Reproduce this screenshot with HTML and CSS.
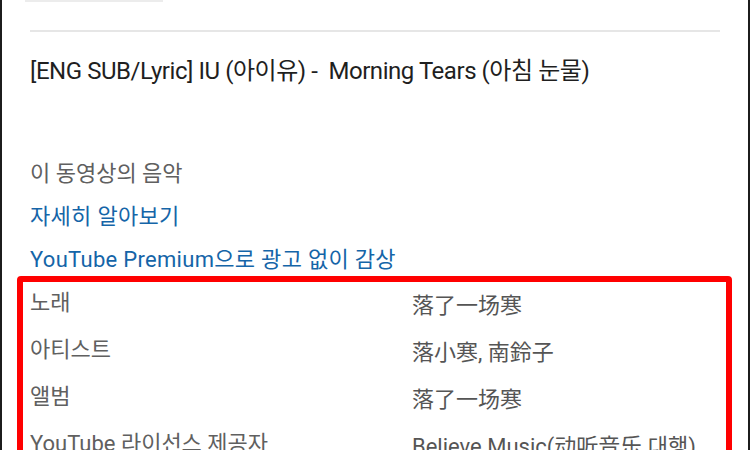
FILE: index.html
```html
<!doctype html>
<html>
<head>
<meta charset="utf-8">
<title>이 동영상의 음악</title>
<link rel="stylesheet" href="styles.css">
</head>
<body>
<div class="page">
	<div class="top-strip"><span class="chip"></span></div>
	<div class="divider"></div>
	<h1 class="title">[ENG SUB/Lyric] IU (아이유) -&nbsp; Morning Tears (아침 눈물)</h1>
	<div class="music">
		<p class="music-head">이 동영상의 음악</p>
		<a class="link">자세히 알아보기</a>
		<a class="link">YouTube Premium으로 광고 없이 감상</a>
	</div>
	<div class="box">
		<div class="row"><span class="label">노래</span><span class="value">落了一场寒</span></div>
		<div class="row"><span class="label">아티스트</span><span class="value">落小寒, 南鈴子</span></div>
		<div class="row"><span class="label">앨범</span><span class="value">落了一场寒</span></div>
		<div class="row"><span class="label">YouTube 라이선스 제공자</span><span class="value">Believe Music(动听音乐 대행)</span></div>
	</div>
</div>
</body>
</html>
```
FILE: styles.css
```css
*{padding:0; margin:0;}
body{background:#fff; font-family:Roboto,"Noto Sans CJK KR",sans-serif; overflow:hidden;}
.page{width:746px; height:450px; border-left:2px solid #1c1c1c; border-right:2px solid #1c1c1c; overflow:hidden;}
.top-strip{height:2px;}
.chip{display:block; width:138px; height:2px; margin-left:23px; background:#ececec;}
.divider{height:2px; background:#e6e6e6; margin:28px 28px 0 28px;}
.title{font-size:24px; font-weight:normal; color:#1f1f1f; line-height:30px; margin:24px 0 0 28px; letter-spacing:-0.45px;}
.music{margin:72px 0 0 28px; display:flex; flex-direction:column; gap:11px;}
.music-head{font-size:22px; line-height:32px; color:#606060;}
.link{display:block; font-size:22px; line-height:32px; color:#1565a8; letter-spacing:0.3px;}
.box{box-sizing:border-box; margin:0 0 0 15px; width:715px; height:200px; border:6px solid #ff0000; border-radius:4px; padding:5px 0 0 7px;}
.row{display:flex; height:47px; font-size:22px; line-height:32px;}
.label{width:382px; flex:none; color:#606060;}
.value{color:#555; padding-top:3px; white-space:nowrap;}
```
